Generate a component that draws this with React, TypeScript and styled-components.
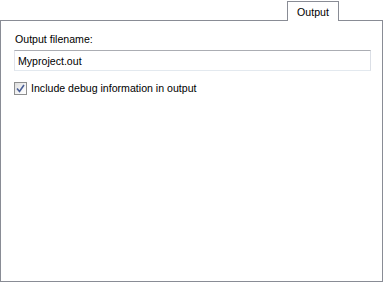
import React from "react";
import styled, { createGlobalStyle } from "styled-components";

const Global = createGlobalStyle`
  html, body { margin: 0; padding: 0; background: #ffffff; }
  body { font-family: Tahoma, "Liberation Sans", Arial, sans-serif; font-size: 10.6px; color: #000; }
`;

const Frame = styled.div`
  width: 383px;
  height: 282px;
  display: flex;
  flex-direction: column;
  background: #ffffff;
`;

const TabStrip = styled.div`
  display: flex;
  justify-content: flex-end;
  padding: 1px 44px 0 0;
  height: 20px;
  box-sizing: border-box;
`;

const Tab = styled.div`
  position: relative;
  z-index: 1;
  width: 52px;
  height: 20px;
  box-sizing: border-box;
  border: 1px solid #898c95;
  border-bottom: none;
  background: #ffffff;
  display: flex;
  align-items: center;
  justify-content: center;
  padding-top: 1px;
`;

const Panel = styled.div`
  flex: 1;
  border: 1px solid #898c95;
  box-sizing: border-box;
  padding: 12px 11px 0 13px;
  display: flex;
  flex-direction: column;
`;

const Label = styled.label`
  display: block;
  line-height: 13px;
  margin-bottom: 4px;
  padding-left: 1px;
`;

const TextInput = styled.input`
  box-sizing: border-box;
  width: 100%;
  height: 21px;
  margin: 0;
  padding: 0 3px;
  border: 1px solid;
  border-color: #abadb3 #dbdfe6 #e3e9ef #e2e3ea;
  font-family: inherit;
  font-size: 10.6px;
  color: #000;
  outline: none;
  background: #fff;
`;

const CheckRow = styled.label`
  display: flex;
  align-items: center;
  gap: 4px;
  margin-top: 11px;
  line-height: 13px;
`;

const Box = styled.span`
  width: 13px;
  height: 13px;
  box-sizing: border-box;
  border: 1px solid #8e8f8f;
  background: linear-gradient(135deg, #dcdcdc 0%, #f5f5f5 60%, #ffffff 100%);
  display: flex;
  align-items: center;
  justify-content: center;
  flex: none;
`;

export default function App() {
  return (
    <>
      <Global />
      <Frame>
        <TabStrip>
          <Tab>Output</Tab>
        </TabStrip>
        <Panel>
          <Label htmlFor="fn">Output filename:</Label>
          <TextInput id="fn" defaultValue="Myproject.out" />
          <CheckRow>
            <Box>
              <svg width="9" height="9" viewBox="0 0 9 9">
                <path d="M1 4.5 L3.5 7.5 L8 1" fill="none" stroke="#4a5f97" strokeWidth="1.6" />
              </svg>
            </Box>
            Include debug information in output
          </CheckRow>
        </Panel>
      </Frame>
    </>
  );
}
